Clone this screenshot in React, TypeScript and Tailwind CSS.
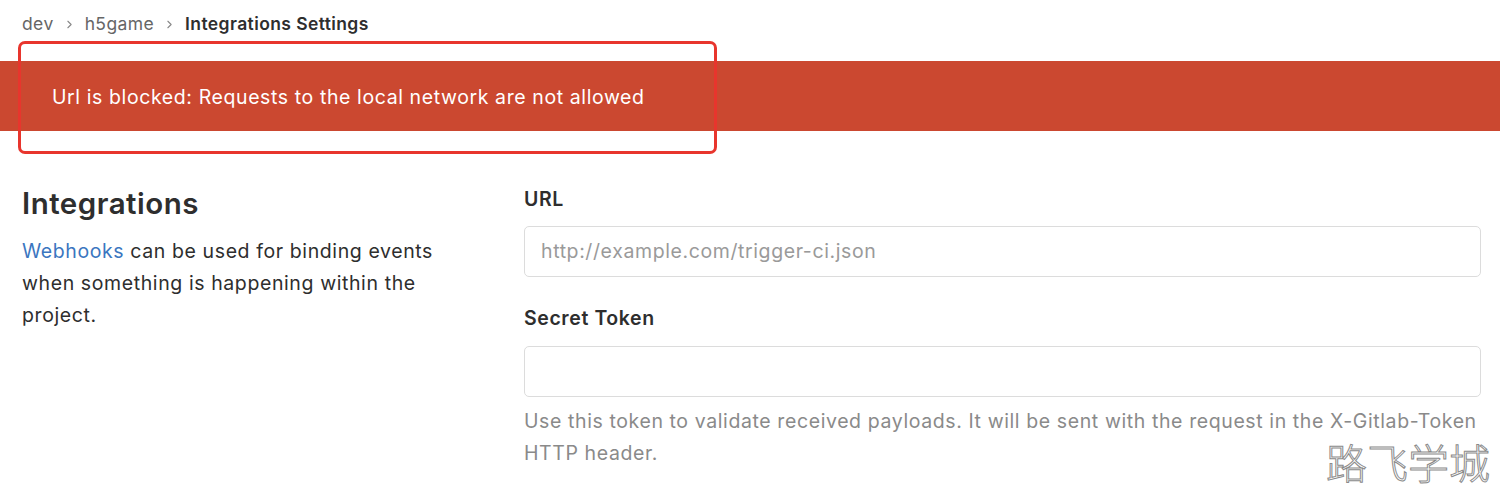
import { ChevronRight } from 'lucide-react';

const font = "font-['Inter','Noto_Sans',sans-serif]";

const App = () => {
  return (
    <div className={`relative w-[1500px] h-[489px] overflow-hidden bg-white ${font} text-[#2e2e2e] tracking-[0.6px]`}>
      {/* Breadcrumb */}
      <nav className="flex items-center h-[48px] pl-[22px] pt-[1px] text-[17.5px] tracking-[0.4px]">
        <span className="text-[#666]">dev</span>
        <ChevronRight size={13} className="mx-[9px] text-[#888]" strokeWidth={2} />
        <span className="text-[#666]">h5game</span>
        <ChevronRight size={13} className="mx-[9px] text-[#888]" strokeWidth={2} />
        <span className="font-semibold text-[#2e2e2e]">Integrations Settings</span>
      </nav>

      {/* Flash alert */}
      <div className="mt-[13px] h-[70px] bg-[#cb4830] flex items-center pl-[52px] pt-[4px]">
        <span className="text-white text-[19.5px]">
          Url is blocked: Requests to the local network are not allowed
        </span>
      </div>

      {/* Annotation box */}
      <div className="absolute left-[18px] top-[41px] w-[699px] h-[113px] border-[3px] border-[#e8352d] rounded-[7px]" />

      {/* Content */}
      <div className="flex pl-[22px] pr-[19px] pt-[70px]">
        <div className="w-[502px] shrink-0">
          <h2 className="text-[29.5px] font-semibold leading-[38px] -mt-[17px] tracking-[0.5px]">Integrations</h2>
          <p className="mt-[13px] text-[19.5px] leading-[32px] w-[440px]">
            <a href="#webhooks" className="text-[#3b76c0]">Webhooks</a> can be used for binding events
            when something is happening within the project.
          </p>
        </div>

        <div className="flex-1 -mt-[16px]">
          <label className="block text-[19.5px] font-semibold leading-[28px]">URL</label>
          <div className="mt-[13px] h-[51px] border border-[#dcdcdc] rounded-[5px] flex items-center pl-[16px] text-[19.5px] text-[#9a9a9a]">
            http://example.com/trigger-ci.json
          </div>

          <label className="block mt-[27px] text-[19.5px] font-semibold leading-[28px]">Secret Token</label>
          <div className="mt-[14px] h-[51px] border border-[#dcdcdc] rounded-[5px]" />

          <p className="mt-[8px] text-[19.5px] leading-[32px] text-[#8a8a8a]">
            Use this token to validate received payloads. It will be sent with the request in the X-Gitlab-Token
            HTTP header.
          </p>
        </div>
      </div>

      {/* Watermark */}
      <div className="absolute right-[10px] bottom-[6px] text-[41px] leading-[44px] tracking-normal text-white font-['Noto_Sans_CJK_SC',sans-serif] font-light [-webkit-text-stroke:1px_#8a8a8a]">
        路飞学城
      </div>
    </div>
  );
};

export default App;
